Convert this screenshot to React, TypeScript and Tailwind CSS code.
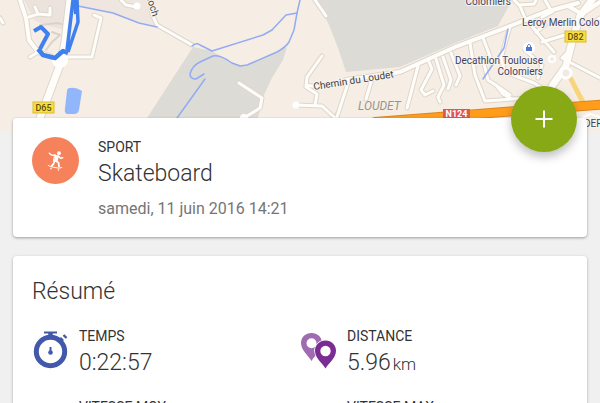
import type { ReactNode } from 'react'

interface StatProps {
  label: string
  value?: string
  unit?: string
  icon?: ReactNode
}

const SMALL_ROADS = [
  'M29 17 38 14 50 15 50 8 M38 14 35 7',
  'M68 57 92 57 101 18 94 15',
  'M38 52 30 57',
  'M0 18 3 23',
  'M121 0 126 5 137 7',
  'M150 0 152 14 157 25 192 45',
  'M315 0 326 16',
  'M239 83 262 98 260 108 244 118',
  'M322 56 307 77 306 87 317 94 315 105 M296 105 322 106 334 117',
  'M306 85 318 87',
  'M348 83 337 117',
  'M372 79 366 99',
  'M418 66 407 108',
  'M429 62 432 69 421 90 425 95 433 91',
  'M436 59 444 85 438 97 440 102',
  'M443 57 451 80 448 89',
  'M451 53 460 76 456 85',
  'M470 43 475 75 485 101 512 99 545 97',
  'M483 38 490 56 483 60 488 80 500 88 510 95',
  'M510 26 501 58 505 72 534 83 555 97',
  'M496 85 503 94 512 99',
  'M514 0 520 6 525 18 540 36 554 52',
  'M519 5 534 4 536 0',
  'M542 42 565 35 M536 32 545 25',
  'M545 0 552 12 542 17',
  'M570 50 562 58 575 65 600 78',
  'M525 50 542 65 538 78',
  'M590 25 600 18',
]

const WIDE_ROADS = [
  'M20 0 26 18 29 40 38 52 60 60',
  'M346 80 400 72 455 47 510 26 545 12 578 3',
  'M568 6 582 14 600 2',
]

const MAIN_ROADS = [
  'M70 0 65 42 61 62 40 118',
  'M592 0 580 16 572 42 566 66 552 86',
]

function MapView() {
  return (
    <svg
      viewBox="0 0 600 131"
      preserveAspectRatio="xMidYMid slice"
      className="block h-[131px] w-full"
      role="img"
      aria-label="Parcours"
      fontFamily="Roboto, sans-serif"
    >
      <rect width="600" height="131" fill="#f6eee5" />
      <path d="M24 0H68L65 30 45 25 34 20Z" fill="#ece4dc" />
      <path d="M72 0H151L157 26 137 21 112 12 79 6Z" fill="#eee6df" />
      <path d="M147 118 193 47 212 51 232 63 245 66 287 47 283 60 272 78 264 95 258 118Z" fill="#dddbd5" />
      <path d="M317 0H512L498 26 455 43 400 67 346 72 338 48 329 25Z" fill="#dddbd5" />

      <g fill="none" strokeLinejoin="round" strokeLinecap="round">
        <path d="M334 117 340 105" stroke="#c9c4bb" strokeWidth="1" />
        <path d="M40 25 58 23 65 25 M52 32 60 35 52 42 46 50" stroke="#d9d3ca" strokeWidth="2" />
        <g stroke="#ddd6cc">
          <path d={SMALL_ROADS.join(' ')} strokeWidth="5" />
          <path d={WIDE_ROADS.join(' ')} strokeWidth="6" />
          <path d={MAIN_ROADS.join(' ')} strokeWidth="9" />
        </g>
        <g stroke="#fffdfa">
          <path d={SMALL_ROADS.join(' ')} strokeWidth="3" />
          <path d={WIDE_ROADS.join(' ')} strokeWidth="4" />
          <path d={MAIN_ROADS.join(' ')} strokeWidth="7" />
        </g>
        <g stroke="#93abf2" strokeWidth="1.5">
          <path d="M78 6 113 13 139 23 157 27 M192 46Q196 42 200 45L212 51 263 35 272 30 286 15 297 13 300 0" />
          <path d="M297 13 294 30 289 42Q286 47 277 52L247 65 240 66 232 63Q220 54 213 56L200 62Q192 66 190 74 190 79 196 79L204 74M205 79 177 118" />
          <path d="M508 29 504 48 483 79" />
        </g>
        <path d="M571 79 577 91 584 104" stroke="#f8d47d" strokeWidth="5" />
        <path d="M375 122 510 111.500 610 104" stroke="#dd8420" strokeWidth="10" />
        <path d="M375 122 510 111.500 610 104" stroke="#ff9d1b" strokeWidth="8" />
        <path d="M580 119 590 114 600 117" stroke="#fff" strokeWidth="2" />
      </g>
      <circle cx="60" cy="60" r="8" fill="#fff" />
      <circle cx="137" cy="6" r="3.500" fill="#fff" />
      <circle cx="296" cy="105" r="3.500" fill="#fff" />
      <circle cx="244" cy="118" r="4" fill="#fff" />
      <circle cx="566" cy="73" r="5" fill="#f0eae2" stroke="#fff" strokeWidth="3" />
      <circle cx="552" cy="59" r="3" fill="#f0eae2" stroke="#fff" strokeWidth="2" />
      <path d="M70 88Q76 87 82 91L79 110Q78 114 74 114H67Q64 113 65 108L67 91Q67 88 70 88Z" fill="#91b6fc" />

      <g fill="none" stroke="#3f80ee" strokeLinejoin="round">
        <path d="M34 31 41 27 48 34 40 49" strokeWidth="4" />
        <path d="M73 0 67 50 M77 0 78 22 68 52" strokeWidth="3.500" />
        <path d="M38 49 43 55 55 58 63 51 68 53" strokeWidth="4.500" />
        <path d="M74 0 76 14" strokeWidth="4" />
      </g>

      <rect x="33" y="102" width="21" height="11" fill="#fade3c" stroke="#d6bd37" />
      <text x="43.500" y="111" textAnchor="middle" fontSize="9" fontWeight="500" fill="#5b4c12">D65</text>
      <rect x="565" y="31" width="21" height="11" fill="#fade3c" stroke="#d6bd37" />
      <text x="575.500" y="40" textAnchor="middle" fontSize="9" fontWeight="500" fill="#5b4c12">D82</text>
      <rect x="443" y="109" width="27" height="10" fill="#e0574f" />
      <text x="456.500" y="117" textAnchor="middle" fontSize="9" fontWeight="700" fill="#fff">N124</text>

      <g stroke="#f9f3ec" strokeWidth="2" paintOrder="stroke" fill="#3f3f3f">
        <text transform="translate(147 -1) rotate(73)" fontSize="10">loch</text>
        <text transform="translate(314 90) rotate(-9)" fontSize="10">Chemin du Loudet</text>
        <g fill="#3d4263" fontSize="10">
          <text x="511" y="5" textAnchor="end">Colomiers</text>
          <text x="522" y="26">Leroy Merlin Colo</text>
          <text x="543" y="64" textAnchor="end">Decathlon Toulouse</text>
          <text x="543" y="75" textAnchor="end">Colomiers</text>
          <text x="584" y="127">DER</text>
        </g>
      </g>
      <text x="358" y="110" fontSize="12" fontStyle="italic" fill="#9a948c">LOUDET</text>
      <circle cx="529" cy="48" r="6" fill="#fff" />
      <path d="M526 47H532V51H526Z" fill="#5377c9" />
      <path d="M527.500 47V45.500Q529 43 530.500 45.500V47" fill="none" stroke="#5377c9" />
    </svg>
  )
}

function SkateboardIcon() {
  return (
    <svg viewBox="0 0 18 20" className="h-5 w-[18px]" fill="none" stroke="#fff" strokeLinecap="round" strokeLinejoin="round">
      <circle cx="12" cy="2.200" r="1.900" fill="#fff" stroke="none" />
      <path d="M8 4 11.500 5 10 10.500 6.800 10Z" fill="#fff" strokeWidth="1" />
      <path d="M8 4.300 4.500 4 2.300 2.300M11.500 5 13.500 7.200 15.800 6.700" strokeWidth="1.400" />
      <path d="M8.500 10 11.500 11.500 12 15.500M7.500 10 6.500 13 4.500 15" strokeWidth="1.800" />
      <path d="M1.200 14.300 3.200 15.600 12 17.200 14.800 16.500" strokeWidth="1" />
      <circle cx="4" cy="17.700" r=".8" fill="#fff" stroke="none" />
      <circle cx="11.500" cy="19" r=".8" fill="#fff" stroke="none" />
    </svg>
  )
}

function StopwatchIcon() {
  return (
    <svg viewBox="0 0 38 40" className="h-10 w-[38px]" fill="none" stroke="#4259ab">
      <circle cx="18.500" cy="21.500" r="14.200" strokeWidth="5" />
      <path d="M12 2.500H25" strokeWidth="2" />
      <path d="M18.500 3V8" strokeWidth="4.500" />
      <path d="M27.500 11.500 30.500 8.500" strokeWidth="4" />
      <path d="M31.500 5 34.500 8" strokeWidth="2.400" />
      <path d="M18.500 17V23" strokeWidth="2" />
      <circle cx="18.500" cy="22.500" r="2.300" fill="#4259ab" stroke="none" />
    </svg>
  )
}

function PinsIcon() {
  return (
    <svg viewBox="0 0 38 40" className="h-10 w-[38px]" fillRule="evenodd">
      <path d="M11.500 3C5.500 3 1 7.300 1 13C1 20 8 25 11.500 31C15 25 22 20 22 13C22 7.300 17.500 3 11.500 3ZM11.500 8.200A5 5 0 1 0 11.500 18.200A5 5 0 1 0 11.500 8.200Z" fill="#a06bb0" />
      <path
        d="M25.500 10.500C19.500 10.500 15 15 15 20.700C15 28 22 32.500 25.500 38.500C29 32.500 36 28 36 20.700C36 15 31.500 10.500 25.500 10.500Z"
        fill="#7a2c93"
        stroke="#fff"
        strokeWidth="1.600"
        paintOrder="stroke"
      />
      <circle cx="25.500" cy="21" r="5.200" fill="#fff" />
    </svg>
  )
}

function Stat({ label, value, unit, icon }: StatProps) {
  return (
    <div className="flex gap-[9px]">
      <div className="w-[38px] shrink-0 pt-1">{icon}</div>
      <div>
        <p className="text-sm leading-5">{label}</p>
        {value && (
          <p className="text-[23px] font-light leading-[34px]">
            {value}
            {unit && <span className="ml-0.5 text-[17px]">{unit}</span>}
          </p>
        )}
      </div>
    </div>
  )
}

export default function App() {
  return (
    <div className="h-screen overflow-hidden bg-[#f0f0f0] font-['Roboto',sans-serif] text-[#333333]">
      <MapView />

      <main className="-mt-[13px] flex flex-col gap-[19px] px-[13px]">
        <section className="relative flex gap-[19px] rounded-sm bg-white px-[19px] pb-4 pt-[19px] shadow-[0_1px_3px_rgba(0,0,0,0.35)]">
          <div className="flex size-[47px] shrink-0 items-center justify-center rounded-full bg-[#f5825b]">
            <SkateboardIcon />
          </div>
          <div>
            <p className="text-sm leading-5">SPORT</p>
            <h1 className="text-[23px] font-light leading-[34px]">Skateboard</h1>
            <p className="mt-1.5 text-base leading-6 text-[#757575]">samedi, 11 juin 2016 14:21</p>
          </div>
          <button
            type="button"
            aria-label="Ajouter"
            className="absolute -top-8 right-2.5 flex size-[66px] items-center justify-center rounded-full bg-[#86a915] shadow-[0_5px_10px_rgba(0,0,0,0.25)]"
          >
            <svg viewBox="0 0 18 18" className="size-[18px]" stroke="#fff" strokeWidth="2">
              <path d="M9 0.500V17.500M0.500 9H17.500" />
            </svg>
          </button>
        </section>

        <section className="rounded-sm bg-white px-[19px] py-[19px] shadow-[0_1px_3px_rgba(0,0,0,0.3)]">
          <h2 className="text-[23px] font-light leading-[34px]">Résumé</h2>
          <div className="mt-[17px] grid grid-cols-2 gap-y-4">
            <Stat label="TEMPS" value="0:22:57" icon={<StopwatchIcon />} />
            <Stat label="DISTANCE" value="5.96" unit="km" icon={<PinsIcon />} />
            <Stat label="VITESSE MOY." />
            <Stat label="VITESSE MAX." />
          </div>
        </section>
      </main>
    </div>
  )
}
